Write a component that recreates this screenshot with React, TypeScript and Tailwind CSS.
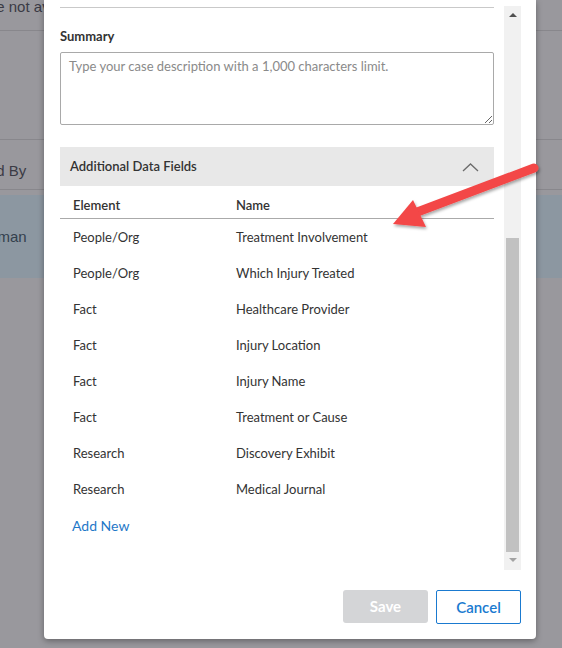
const rows: [string, string][] = [
  ['People/Org', 'Treatment Involvement'],
  ['People/Org', 'Which Injury Treated'],
  ['Fact', 'Healthcare Provider'],
  ['Fact', 'Injury Location'],
  ['Fact', 'Injury Name'],
  ['Fact', 'Treatment or Cause'],
  ['Research', 'Discovery Exhibit'],
  ['Research', 'Medical Journal'],
]

function BackgroundPage() {
  // the case list behind the dialog, dimmed by the overlay
  return (
    <div className="flex h-full w-full flex-col overflow-hidden bg-[#99989d] font-['Liberation_Sans',Arial,sans-serif] text-[15px] text-[#3b3b45]">
      <div className="flex h-[31px] items-start border-b border-[#88878c]">
        <span className="-mt-[4px] -ml-[66px] whitespace-nowrap">Values are not available</span>
      </div>
      <div className="h-[109px] border-b border-[#88878c]" />
      <div className="flex h-[50px] items-center border-b border-[#88878c] pt-[14px]">
        <span className="-ml-[52px] whitespace-nowrap">Modified By</span>
      </div>
      <div className="h-[5px]" />
      <div className="flex h-[83px] items-center bg-[#8c97a1] pt-[2px] text-[#33404d]">
        <span className="-ml-[55px] whitespace-nowrap">Jill Bateman</span>
      </div>
    </div>
  )
}

function FakeScrollbar() {
  return (
    <div className="mt-[6px] flex h-[564px] w-[17px] flex-col items-center bg-[#f1f1f1]">
      <div className="mt-[7px] h-0 w-0 border-x-[4px] border-b-[4px] border-x-transparent border-b-[#505050]" />
      <div className="mt-[221px] h-[314px] w-[13px] bg-[#c1c1c1]" />
      <div className="mt-[6px] h-0 w-0 border-x-[4px] border-t-[4px] border-x-transparent border-t-[#a3a3a3]" />
    </div>
  )
}

function Arrow() {
  return (
    <svg
      className="pointer-events-none absolute left-0 top-0"
      width="562"
      height="648"
      viewBox="0 0 562 648"
    >
      <defs>
        <filter id="sh" x="-20%" y="-20%" width="140%" height="140%">
          <feDropShadow dx="1" dy="2" stdDeviation="1.5" floodColor="#000" floodOpacity="0.35" />
        </filter>
      </defs>
      <g filter="url(#sh)" fill="#f34646">
        <line x1="534" y1="168" x2="412" y2="214" stroke="#f34646" strokeWidth="9" strokeLinecap="round" />
        <polygon points="393,224 413,200 426,227" />
      </g>
    </svg>
  )
}

export default function App() {
  return (
    <div className="relative h-[648px] w-[562px] overflow-hidden bg-[#99989d]">
      <BackgroundPage />

      <div className="absolute left-[44px] top-0 flex h-[639px] w-[492px] flex-col rounded-b-[4px] bg-white pl-[16px] pr-[15px] font-['Lato','Noto_Sans',sans-serif] text-[13px] text-[#333] shadow-[0_2px_6px_rgba(0,0,0,0.35)]">
        <div className="flex h-[570px] gap-[10px]">
          <div className="w-[434px]">
            <div className="h-[8px] border-b border-[#c9c9c9]" />
            <div className="mt-[20px] h-[16px] font-bold leading-[16px]">Summary</div>
            <textarea
              className="mt-[8px] block h-[73px] w-full resize-y rounded-[2px] border border-[#a9a9a9] px-[8px] py-[5px] leading-[16px] text-[#333] outline-none placeholder:text-[#8a8a8a]"
              placeholder="Type your case description with a 1,000 characters limit."
            />
            <div className="mt-[22px] flex h-[39px] items-center justify-between bg-[#e8e8e8] pl-[10px] pr-[15px] pt-[1px]">
              <span className="font-semibold">Additional Data Fields</span>
              <svg width="17" height="9" viewBox="0 0 17 9" fill="none">
                <polyline points="1,8 8.5,1 16,8" stroke="#6b6b6b" strokeWidth="1.3" />
              </svg>
            </div>
            <div className="flex h-[33px] border-b border-[#aaaaaa] pl-[13px] pt-[11px] font-semibold leading-[16px]">
              <span className="w-[163px]">Element</span>
              <span>Name</span>
            </div>
            {rows.map(([el, name], i) => (
              <div key={i} className="flex h-[36px] items-center pl-[13px] pt-[2px]">
                <span className="w-[163px]">{el}</span>
                <span>{name}</span>
              </div>
            ))}
            <div className="flex h-[36px] items-center pl-[12px] pt-[1px]">
              <a className="cursor-pointer text-[14px] text-[#1f78c8]">Add New</a>
            </div>
          </div>
          <FakeScrollbar />
        </div>
        <div className="mt-[20px] flex justify-end gap-[8px]">
          <button className="h-[33px] w-[85px] rounded-[3px] bg-[#d4d5d7] text-[15px] font-bold text-white">
            Save
          </button>
          <button className="h-[34px] w-[85px] rounded-[2px] border-[1.5px] border-[#1a7ad0] bg-white text-[15px] font-semibold text-[#1a7ad0]">
            Cancel
          </button>
        </div>
      </div>

      <Arrow />
    </div>
  )
}
